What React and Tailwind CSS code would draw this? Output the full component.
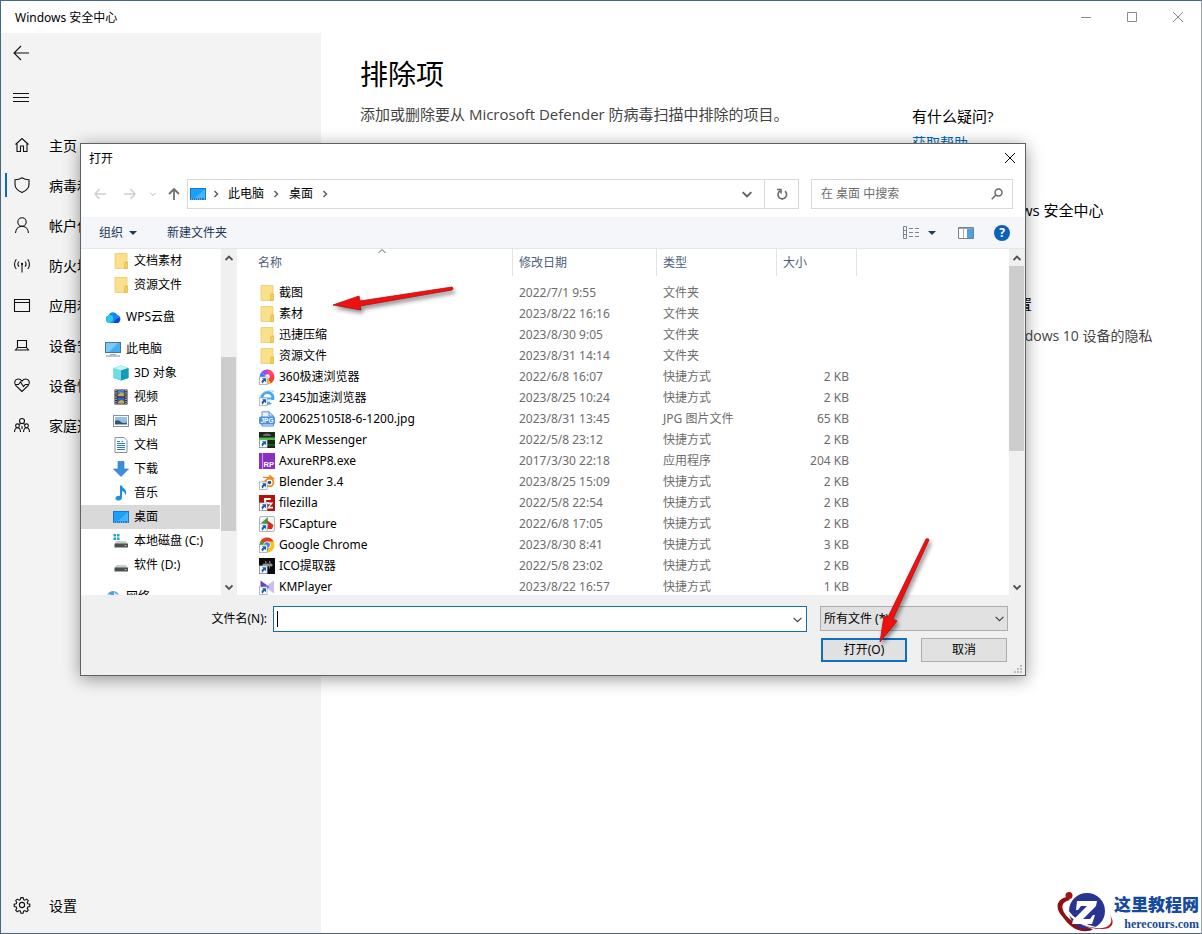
import React from 'react';

const SIDE_ITEMS = [
  { icon: 'home',    label: '主页' },
  { icon: 'shield',  label: '病毒和威胁', active: true },
  { icon: 'user',    label: '帐户保护' },
  { icon: 'antenna', label: '防火墙' },
  { icon: 'app',     label: '应用和' },
  { icon: 'laptop',  label: '设备安全' },
  { icon: 'heart',   label: '设备性能' },
  { icon: 'family',  label: '家庭选项' },
];

const TREE = [
  { icon: 'folder',   label: '文档素材', sub: true },
  { icon: 'folder',   label: '资源文件', sub: true },
  { icon: 'cloud',    label: 'WPS云盘', gap: true },
  { icon: 'pc',       label: '此电脑', gap: true },
  { icon: 'cube',     label: '3D 对象', sub: true },
  { icon: 'video',    label: '视频', sub: true },
  { icon: 'picture',  label: '图片', sub: true },
  { icon: 'document', label: '文档', sub: true },
  { icon: 'download', label: '下载', sub: true },
  { icon: 'music',    label: '音乐', sub: true },
  { icon: 'desktop',  label: '桌面', sub: true, active: true },
  { icon: 'diskC',    label: '本地磁盘 (C:)', sub: true },
  { icon: 'disk',     label: '软件 (D:)', sub: true },
  { icon: 'network',  label: '网络', gap: true },
];

const FILES = [
  ['folder',   '截图',                  '2022/7/1 9:55',    '文件夹',       ''],
  ['folder',   '素材',                  '2023/8/22 16:16',  '文件夹',       ''],
  ['folder',   '迅捷压缩',              '2023/8/30 9:05',   '文件夹',       ''],
  ['folder',   '资源文件',              '2023/8/31 14:14',  '文件夹',       ''],
  ['b360',     '360极速浏览器',         '2022/6/8 16:07',   '快捷方式',     '2 KB'],
  ['b2345',    '2345加速浏览器',        '2023/8/25 10:24',  '快捷方式',     '2 KB'],
  ['jpg',      '200625105I8-6-1200.jpg', '2023/8/31 13:45', 'JPG 图片文件', '65 KB'],
  ['apk',      'APK Messenger',         '2022/5/8 23:12',   '快捷方式',     '2 KB'],
  ['axure',    'AxureRP8.exe',          '2017/3/30 22:18',  '应用程序',     '204 KB'],
  ['blender',  'Blender 3.4',           '2023/8/25 15:09',  '快捷方式',     '2 KB'],
  ['filezilla', 'filezilla',            '2022/5/8 22:54',   '快捷方式',     '2 KB'],
  ['fsc',      'FSCapture',             '2022/6/8 17:05',   '快捷方式',     '2 KB'],
  ['chrome',   'Google Chrome',         '2023/8/30 8:41',   '快捷方式',     '3 KB'],
  ['ico',      'ICO提取器',             '2022/5/8 23:02',   '快捷方式',     '2 KB'],
  ['km',       'KMPlayer',              '2023/8/22 16:57',  '快捷方式',     '1 KB'],
];

// thin outline glyphs of the left navigation
const LINE = {
  home: <path d="M1.5 7.5 8 1.5l6.5 6M3 6.5v8h3.5V9h3v5.500H13v-8" />,
  shield: <path d="M8 .8c2 1.4 4.300 2 7 2v4.600c0 3.600-2.700 6.100-7 8.100-4.300-2-7-4.500-7-8.100V2.800c2.700 0 5-.6 7-2z" />,
  user: <><circle cx="8" cy="5" r="4.200" /><path d="M1.500 16c.3-4 3-6.800 6.500-6.800s6.200 2.800 6.500 6.800" /></>,
  antenna: <><circle cx="8" cy="7" r=".6" /><path d="M8 7.500v8M5 4.500a4 4 0 0 0 0 5.200M11 4.500a4 4 0 0 1 0 5.200M2.300 2.300a7.500 7.500 0 0 0 0 9.700M13.700 2.300a7.500 7.500 0 0 1 0 9.700" /></>,
  app: <path d="M.5 2.500h15v12H.5zM.5 5.500h15" />,
  laptop: <path d="M3.500 3.500h9v7h-9zM3.500 10.500 1.500 13h13l-2-2.500" />,
  heart: <><path d="M8 14.500 1.700 8.300C-.3 6 .7 2 4.200 2 6 2 7.200 3 8 4.200 8.800 3 10 2 11.800 2c3.500 0 4.500 4 2.500 6.300z" /><path d="M1 7.500h3.500l2-2.500 3 4.500 1.800-2H15" /></>,
  family: <><circle cx="8" cy="4" r="2.500" /><circle cx="3.500" cy="8.800" r="1.900" /><circle cx="12.500" cy="8.800" r="1.900" /><path d="M.5 15c.2-2.600 1.300-4.200 3-4.200s2.900 1.600 3 4.200M9.500 15c.2-2.600 1.300-4.200 3-4.200s2.900 1.600 3 4.200M5 7.500c.6-.7 1.600-1 3-1s2.400.3 3 1M8 9v3" /></>,
  gear: <><circle cx="8" cy="8" r="2.600" /><path d="M6.900.6h2.200l.5 2 1.300.6 1.800-1.100 1.600 1.600-1.100 1.800.6 1.300 2 .5v2.200l-2 .5-.6 1.300 1.100 1.800-1.600 1.600-1.800-1.100-1.300.6-.5 2H6.900l-.5-2-1.300-.6-1.800 1.100-1.600-1.600 1.100-1.800-.6-1.300-2-.5V7.300l2-.5.6-1.300-1.100-1.800 1.600-1.600 1.800 1.100 1.300-.6z" /></>,
  back: <path d="M8 1 1 8l7 7M1 8h15" />,
  menu: <path d="M0 4.500h16M0 8.500h16M0 12.500h16" />,
};

function LineIcon({ name }) {
  return (
    <svg viewBox="0 0 16 16" className="w-4 h-4 shrink-0 overflow-visible" fill="none" stroke="#111" strokeWidth="1.1">
      {LINE[name]}
    </svg>
  );
}

const Shortcut = () => (
  <g>
    <rect x=".4" y="7.900" width="7.700" height="7.700" fill="#fff" stroke="#8fa0b4" strokeWidth=".7" />
    <path d="M3 9.300h4v4L5.700 12c-1.200.8-1.700 1.500-1.800 2.700C1.800 13.200 2.500 11.500 4.300 10.600z" fill="#1d5ca8" />
  </g>
);

const Disk = () => (
  <g>
    <path d="M3.500 8h9.500l2 3H1.500z" fill="#c9cbcd" />
    <rect x="1.500" y="10.500" width="13.500" height="4" rx=".6" fill="#4b4f52" />
    <rect x="11.800" y="12" width="1.500" height="1.200" fill="#7be08a" />
  </g>
);

const COLOR = {
  folder: <><path d="M2 .5h12v15H2z" fill="#fbe08c" /><path d="M2 .5h12v15H2z" fill="none" stroke="#ecca68" strokeWidth=".8" /><path d="M12 9h2.500v6.500h-3z" fill="#f5cf62" stroke="#d9ac3b" strokeWidth=".6" /></>,
  cloud: <><path d="M4.500 14a4 4 0 0 1-.8-7.800 4.700 4.700 0 0 1 8.700-.2A4.100 4.100 0 0 1 12 14z" fill="#1687ee" /><path d="M4.500 14a4 4 0 0 1-.5-7.800c1.800-.6 3.400.2 4 1.800 1 2.800-.5 5-3.500 6z" fill="#27cbe8" /><path d="M9 14c.2-3 2.300-5 6-5.500.5 3.500-1 5.500-3 5.500z" fill="#1547d4" /></>,
  pc: <><rect x=".5" y="1.500" width="15" height="10" fill="#45aef2" stroke="#47759b" /><path d="M1 2h12L4 11H1z" fill="#7cc9f7" /><path d="M5 13h6v1H5z" fill="#9fb3c2" /><path d="M1 14.500h14v1H1z" fill="#6d8ba3" /></>,
  cube: <><path d="m8 .5 7.500 2.500v10L8 15.500.5 13V3z" fill="#35bfd6" /><path d="M.5 3 8 5.500v10L.5 13z" fill="#73dbe6" /><path d="m.5 3 7.500-2.500L15.500 3 8 5.500z" fill="#c4f2f5" /><path d="M8 5.500 15.500 3v10L8 15.500z" fill="#159db8" /></>,
  video: <><rect x="1.500" y=".5" width="13" height="15" fill="#2c2c2c" /><path d="M4.500 1h7v6.500h-7z" fill="#4c76d0" /><path d="M4.500 8.500h7V15h-7z" fill="#3b62bd" /><path d="m5 6 3-3 3 2v2H5zM5 13l3-2 3 1v2.500H5z" fill="#d1a83d" /><path d="M3 1v14M13 1v14" stroke="#ddd" strokeWidth="1.200" strokeDasharray="1.200 1" /></>,
  picture: <><rect x=".5" y="2.500" width="15" height="11" fill="#fff" stroke="#8a9298" /><path d="M2 4h12v8H2z" fill="#8fc3ea" /><path d="M2 8c3-1.500 4-.5 6 1s4 1 6 .5V12H2z" fill="#33566b" /><path d="M2 11h12v1H2z" fill="#9db4c0" /></>,
  document: <><path d="M2 .5h9l3 3v12H2z" fill="#fff" stroke="#8492a1" /><path d="M4 4.500h3M4 6.500h8M4 8.500h8M4 10.500h8M4 12.500h8M8.500 4.500h1.500" stroke="#2c7cc4" strokeWidth="1" /></>,
  download: <path d="M5 .5h6V8h4.500L8 15.500.5 8H5z" fill="#3b8fdf" stroke="#276fb8" strokeWidth=".6" />,
  music: <path d="M7 .5h2c.3 2.600 4 3.500 4.200 6.500.1 1.400-.4 2.400-1.200 3.300.4-2.500-.9-3.700-3-4.300v6.500c0 1.900-1.600 3-3.400 3S2.500 14.700 2.500 13.200 4 10.500 7 10.800z" fill="#1b8fe8" />,
  desktop: <><path d="M0 2h16v12H0z" fill="#1779c8" /><path d="M1 3h14v9H1z" fill="#18a0fb" /><path d="M15 3v9H5z" fill="#43b5ff" /><path d="M1 13h1M3 13h10M14 13h1" stroke="#e6f4ff" strokeWidth=".8" strokeDasharray="1 1" /></>,
  diskC: <><Disk /><path d="M.5 1h2.500v2.500H.5zM4 1h2.500v2.500H4zM.5 4.500h2.500V7H.5zM4 4.500h2.500V7H4z" fill="#1aa3dd" /></>,
  disk: <Disk />,
  network: <><circle cx="8" cy="8" r="6" fill="#4fa3d8" /><path d="M3 5c2 1 3 0 4 2s-1 4-1 6C3 12 1 9 3 5zM9 2.500c1 2 2 2 4 3l-1 4-3-2z" fill="#cfe9f7" /></>,
  b360: <><path d="M8 8 2 3.500A7.500 7.500 0 0 1 8.500.5L12 2z" fill="#9a4ee8" /><path d="M8 8 8.500.5A7.500 7.500 0 0 1 15 5.500l-2 2z" fill="#ff3d8b" /><path d="m8 8 7-2.500a7.500 7.500 0 0 1-3.500 9z" fill="#f8442e" /><path d="m8 8 3.500 6.500a7.500 7.500 0 0 1-6 .5z" fill="#fbb62a" /><path d="M8 8 .7 9.500A7.500 7.500 0 0 1 2 3.500z" fill="#2d7ff5" /><circle cx="8.500" cy="7.500" r="2.300" fill="#fff" /><Shortcut /></>,
  b2345: <><circle cx="8.500" cy="8" r="5.500" fill="none" stroke="#46a7ee" strokeWidth="3" /><path d="M4 7.500h10v2H4z" fill="#46a7ee" /><path d="M11 10h5v3h-5z" fill="#fff" /><path d="M1 8C1 3 9-1 15 1.500" fill="none" stroke="#8bcbf7" /><Shortcut /></>,
  jpg: <><path d="M3 .8h7L14.500 5v10H3z" fill="#eaf3fd" stroke="#4a90dc" /><path d="M10 .8V5h4.500" fill="none" stroke="#4a90dc" /><rect x="0" y="5.500" width="16" height="8" rx="2" fill="#4a90dc" /><text x="8" y="12" fontSize="6.500" fontWeight="700" textAnchor="middle" fill="#fff" fontFamily="Liberation Sans, sans-serif">JPG</text></>,
  apk: <><rect width="16" height="16" fill="#20241f" /><path d="M0 5.500h16v2.500H0z" fill="#38c433" /><path d="M4 4a4 2.500 0 0 1 8 0z" fill="#686d66" /><path d="M6 12h10v2H6z" fill="#165b1a" /><Shortcut /></>,
  axure: <><rect width="16" height="16" fill="#8d2fc0" /><path d="M3.500 0v16" stroke="#dcbaf0" strokeWidth=".8" /><text x="9.800" y="13.800" fontSize="7.500" fontWeight="700" textAnchor="middle" fill="#fff" fontFamily="Liberation Sans, sans-serif">RP</text></>,
  blender: <><path d="M1.500 9.500 9 4H4V2.800h7L9.500 1.500l1.200-.8L16 5z" fill="#e98a22" /><circle cx="10.500" cy="8.500" r="4.800" fill="#ee8c1f" /><circle cx="10.500" cy="8.500" r="3" fill="#fff" /><circle cx="10.500" cy="8.500" r="1.800" fill="#27568f" /><Shortcut /></>,
  filezilla: <><rect width="16" height="16" fill="#b3130c" /><path d="M5 13V3h7l-.4 2H7.200v2H10l-.4 2H7.200v4z" fill="#fff" /><path d="M8.500 7.500h5.800l-3.600 4.300h3.300V13.500H8l3.300-4.300H8.500z" fill="#fff" /><Shortcut /></>,
  fsc: <><rect x=".5" y=".5" width="15" height="15" rx="1.500" fill="#f4f4f4" stroke="#b5b9bb" /><path d="M2 7 9 1l-.5 5 3 2H4z" fill="#35a53d" /><path d="M7 3.500 14.500 9 13 13H8l1-5z" fill="#d62a22" /><Shortcut /></>,
  chrome: <><circle cx="8" cy="8" r="7.500" fill="#fbc116" /><path d="M8 8 1.500 4.200A7.500 7.500 0 0 1 14.600 4.500H8z" fill="#e33b2e" /><path d="M1.500 4.200A7.500 7.500 0 0 0 7.400 15.500L10.500 10 8 8z" fill="#2ba24c" /><circle cx="8" cy="8" r="3.600" fill="#fff" /><circle cx="8" cy="8" r="2.800" fill="#3b7ded" /><Shortcut /></>,
  ico: <><rect width="16" height="16" fill="#0c0c0c" /><path d="M4 6h9v2H4zM6 3.500h1v2M10 3.500h1v2M6.500 8v2.500M10.500 8v2.500" fill="#8d9496" stroke="#8d9496" strokeWidth=".8" /><Shortcut /></>,
  km: <><path d="m1.500 1.500 9 6.500-9 6.500z" fill="#6243c4" /><path d="M15 1.500v13L6 8z" fill="#c9bdf1" /><path d="m6.500 5.200 4 2.800-4 3z" fill="#7c5edb" /><Shortcut /></>,
};

function ColorIcon({ name }) {
  return <svg viewBox="0 0 16 16" className="w-4 h-4 shrink-0">{COLOR[name]}</svg>;
}

function Chevron({ dir = 'down', className = 'w-2 h-2', color = '#606060', width = 1.5 }) {
  const d = { down: 'M.5 2.500 4 6l3.500-3.500', up: 'M.5 6 4 2.500 7.500 6', right: 'M2.500 1 5.500 4l-3 3' }[dir];
  return (
    <svg viewBox="0 0 8 8" className={`shrink-0 ${className}`} fill="none" stroke={color} strokeWidth={width}>
      <path d={d} />
    </svg>
  );
}

const Triangle = () => (
  <svg viewBox="0 0 8 4" className="w-2 h-1 shrink-0"><path d="M0 0h8L4 4z" fill="#1e395b" /></svg>
);

function ScrollBar({ spacer, thumb }) {
  return (
    <div className="w-4 shrink-0 flex flex-col items-stretch bg-[#f0f0f0] pr-px">
      <div className="h-[17px] flex items-center justify-center"><Chevron dir="up" width={1.8} color="#505050" /></div>
      <div className={spacer} />
      <div className={`bg-[#cdcdcd] ${thumb}`} />
      <div className="flex-1" />
      <div className="h-[17px] flex items-center justify-center"><Chevron width={1.8} color="#505050" /></div>
    </div>
  );
}

function TitleBar() {
  return (
    <header className="h-8 shrink-0 flex items-center justify-between pl-[14px] text-[12px]">
      <span className="leading-5 pt-[2px]">Windows 安全中心</span>
      <div className="flex">
        <button aria-label="最小化" className="w-[46px] h-8 flex items-center justify-center">
          <svg viewBox="0 0 10 10" className="w-[10px] h-[10px]" stroke="#8a8a8a"><path d="M0 5.500h10" /></svg>
        </button>
        <button aria-label="最大化" className="w-[46px] h-8 flex items-center justify-center">
          <svg viewBox="0 0 10 10" className="w-[10px] h-[10px]" fill="none" stroke="#8a8a8a"><path d="M.5.5h9v9h-9z" /></svg>
        </button>
        <button aria-label="关闭" className="w-[46px] h-8 flex items-center justify-center">
          <svg viewBox="0 0 10 10" className="w-[10px] h-[10px]" stroke="#8a8a8a"><path d="m0 0 10 10M10 0 0 10" /></svg>
        </button>
      </div>
    </header>
  );
}

function Sidebar() {
  return (
    <aside className="w-80 shrink-0 bg-[#f3f3f3] flex flex-col text-[14px]">
      <button aria-label="返回" className="h-10 w-12 pl-3 flex items-center"><LineIcon name="back" /></button>
      <button aria-label="菜单" className="h-12 w-12 pl-3 flex items-center"><LineIcon name="menu" /></button>
      <nav className="mt-1">
        {SIDE_ITEMS.map(it => (
          <a key={it.label} href="#" className="h-10 flex items-center gap-[19px] pl-1">
            <span className={`w-[2px] h-6 mr-[-12px] ${it.active ? 'bg-[#0f6cb0]' : ''}`} />
            <LineIcon name={it.icon} />
            <span>{it.label}</span>
          </a>
        ))}
      </nav>
      <a href="#" className="h-10 mt-auto mb-2 flex items-center gap-[19px] pl-[13px]">
        <LineIcon name="gear" />
        <span>设置</span>
      </a>
    </aside>
  );
}

function Main() {
  return (
    <main className="flex-1 flex pl-[39px] pt-5 font-['Open_Sans','Noto_Sans_CJK_SC',sans-serif]">
      <section className="w-[552px] shrink-0">
        <h1 className="text-[28px] leading-[42px]">排除项</h1>
        <p className="mt-[7px] text-[15px] leading-6 text-[#444]">添加或删除要从 Microsoft Defender 防病毒扫描中排除的项目。</p>
      </section>
      <section className="flex-1 pt-[51px] text-[15px] leading-6 whitespace-nowrap">
        <h2>有什么疑问?</h2>
        <a href="#" className="block mt-[3px] text-[14px] text-[#0067b8]">获取帮助</a>
        <h2 className="mt-[43px]">帮助改进 Windows 安全中心</h2>
        <a href="#" className="block mt-[2px] text-[14px] text-[#0067b8]">提供反馈</a>
        <h2 className="mt-11">更改你的隐私设置</h2>
        <p className="mt-2 text-[14px] text-[#444]">查看和更改您 Windows 10 设备的隐私</p>
      </section>
    </main>
  );
}

function AddressRow() {
  const navBtn = 'h-[30px] flex items-center justify-center';
  return (
    <div className="flex h-[30px] pl-1 pr-3">
      <button aria-label="后退" className={`w-[30px] ${navBtn}`}>
        <svg viewBox="0 0 12 12" className="w-3 h-3" fill="none" stroke="#cfcfcf" strokeWidth="1.500"><path d="M5.500 1 1 6l4.500 5M1 6h11" /></svg>
      </button>
      <button aria-label="前进" className={`w-[30px] ${navBtn}`}>
        <svg viewBox="0 0 12 12" className="w-3 h-3" fill="none" stroke="#cfcfcf" strokeWidth="1.500"><path d="M6.500 1 11 6l-4.500 5M11 6H0" /></svg>
      </button>
      <button aria-label="最近的位置" className={`w-4 ${navBtn}`}><Chevron className="w-[6px] h-[6px]" color="#cfcfcf" /></button>
      <button aria-label="上移" className={`w-[26px] ${navBtn}`}>
        <svg viewBox="0 0 12 12" className="w-3 h-3" fill="none" stroke="#6f6f6f" strokeWidth="1.800"><path d="M1 6 6 1l5 5M6 1v11" /></svg>
      </button>
      <div className="flex-1 flex border border-[#d9d9d9]">
        <div className="flex-1 flex items-center pl-[2px] pr-3">
          <ColorIcon name="desktop" />
          <Chevron dir="right" className="w-2 h-2 ml-[6px]" />
          <button className="ml-2">此电脑</button>
          <Chevron dir="right" className="w-2 h-2 ml-2" />
          <button className="ml-[9px]">桌面</button>
          <Chevron dir="right" className="w-2 h-2 ml-2" />
          <button aria-label="上一个位置" className="ml-auto"><Chevron className="w-[10px] h-[10px]" /></button>
        </div>
        <button aria-label="刷新" className="w-[34px] border-l border-[#d9d9d9] flex items-center justify-center">
          <svg viewBox="0 0 12 12" className="w-3 h-3" fill="none" stroke="#6a6a6a" strokeWidth="1.600"><path d="M9 3.200A4.300 4.300 0 1 1 4 2.900M1 1.500h4v4" /></svg>
        </button>
      </div>
      <label className="w-[202px] ml-3 px-[9px] flex items-center border border-[#d9d9d9]">
        <input type="text" aria-label="搜索" placeholder="在 桌面 中搜索" className="flex-1 min-w-0 outline-none placeholder-[#6d6d6d]" />
        <svg viewBox="0 0 12 12" className="w-3 h-3" fill="none" stroke="#6a6a6a" strokeWidth="1.500"><circle cx="7.500" cy="4.500" r="3.500" /><path d="M5 7 .7 11.300" /></svg>
      </label>
    </div>
  );
}

function Toolbar() {
  return (
    <div className="h-8 mt-2 flex items-center pl-[18px] pr-[15px] bg-[#f4f6f9] border-b border-[#e3e7ec] text-[#1e395b]">
      <button className="flex items-center gap-[6px]">组织 <Triangle /></button>
      <button className="ml-[30px]">新建文件夹</button>
      <button aria-label="更改视图" className="ml-auto flex items-center gap-[9px]">
        <svg viewBox="0 0 16 14" className="w-4 h-[14px]" fill="none" stroke="#7b858f">
          <path d="M.5.500h3v12h-3zM.5 4.500h3M.5 8.500h3M6 2.500h4M12 2.500h4M6 6.500h4M12 6.500h4M6 10.500h4M12 10.500h4" />
        </svg>
        <Triangle />
      </button>
      <button aria-label="预览窗格" className="ml-[22px]">
        <svg viewBox="0 0 16 12" className="w-4 h-3"><path d="M.5.500h15v11H.5z" fill="#fff" stroke="#77808a" /><path d="M5.500 1v10" stroke="#a5adb5" /><path d="M9 2h6v9H9z" fill="#4aa3e6" /><path d="M1 1.500h14" stroke="#9aa4ae" /></svg>
      </button>
      <button aria-label="帮助" className="ml-5 w-4 h-4 rounded-full bg-[#0a62bd] text-white font-bold leading-4">?</button>
    </div>
  );
}

function TreePane() {
  return (
    <div className="w-[140px] shrink-0 overflow-hidden">
      <ul>
        {TREE.map((n, i) => (
          <li key={i} className={n.gap ? 'mt-2' : ''}>
            <a href="#" className={`h-6 flex items-center whitespace-nowrap gap-[5px] ${n.sub ? 'pl-8' : 'pl-6'} ${n.active ? 'bg-[#d9d9d9] mr-px' : ''}`}>
              <ColorIcon name={n.icon} />
              {n.label}
            </a>
          </li>
        ))}
      </ul>
    </div>
  );
}

function FileTable() {
  const head = 'h-[27px] flex items-center border-r border-[#e0e3e8]';
  return (
    <div className="flex-1 ml-[2px] overflow-hidden">
      <table className="w-full table-fixed border-collapse text-left">
        <colgroup>
          <col className="w-[274px]" />
          <col className="w-36" />
          <col className="w-[120px]" />
          <col className="w-20" />
          <col />
        </colgroup>
        <thead>
          <tr className="h-[33px] align-top text-[#4c607a]">
            <th className="p-0 font-normal relative">
              <div className={`${head} pl-[19px]`}>名称</div>
              <Chevron dir="up" className="w-2 h-2 absolute top-[-2px] left-[139px]" width={1} />
            </th>
            <th className="p-0 font-normal"><div className={`${head} pl-[6px]`}>修改日期</div></th>
            <th className="p-0 font-normal"><div className={`${head} pl-[6px]`}>类型</div></th>
            <th className="p-0 font-normal"><div className={`${head} pl-[6px]`}>大小</div></th>
            <th className="p-0" />
          </tr>
        </thead>
        <tbody className="text-[#6d6d6d]">
          {FILES.map(([icon, name, date, type, size]) => (
            <tr key={name} className="h-[21px]">
              <td className="p-0">
                <div className="flex items-center gap-1 pl-5 text-black"><ColorIcon name={icon} />{name}</div>
              </td>
              <td className="p-0 pl-[6px]">{date}</td>
              <td className="p-0 pl-[6px]">{type}</td>
              <td className="p-0 pr-2 text-right">{size}</td>
              <td className="p-0" />
            </tr>
          ))}
        </tbody>
      </table>
    </div>
  );
}

function DialogFooter() {
  return (
    <div className="flex-1 bg-[#f0f0f0] pt-[11px] pr-[17px]">
      <div className="flex items-start">
        <label htmlFor="fname" className="w-[187px] pr-px text-right leading-[26px]">文件名(N):</label>
        <div className="flex-1 h-[26px] ml-[5px] mr-[13px] pl-[3px] pr-1 flex items-center bg-white border border-[#1a6dab]">
          <span className="w-px h-4 bg-black" />
          <input id="fname" type="text" className="flex-1 min-w-0 h-full px-1 outline-none" />
          <Chevron className="w-[9px] h-[9px]" width={1} color="#404040" />
        </div>
        <div className="w-[188px] relative">
          <select aria-label="文件类型" className="w-full h-[25px] pl-[3px] appearance-none bg-[#e1e1e1] border border-[#adadad] outline-none">
            <option>所有文件 (*)</option>
          </select>
          <Chevron className="w-[9px] h-[9px] absolute right-1 top-2" width={1} color="#404040" />
        </div>
      </div>
      <div className="flex justify-end gap-[14px] mt-[6px] pr-px">
        <button className="w-[86px] h-6 bg-[#e1e1e1] border-2 border-[#0f6fc0]">打开(O)</button>
        <button className="w-[86px] h-6 bg-[#e1e1e1] border border-[#adadad]">取消</button>
      </div>
      <svg viewBox="0 0 9 9" className="w-[9px] h-[9px] ml-auto mr-[-15px] mt-[3px]" fill="#bdbdbd">
        <path d="M6 0h2v2H6zM3 3h2v2H3zM6 3h2v2H6zM0 6h2v2H0zM3 6h2v2H3zM6 6h2v2H6z" />
      </svg>
    </div>
  );
}

function OpenDialog() {
  return (
    <div role="dialog" aria-label="打开"
      className="absolute left-[79px] top-[142px] w-[946px] h-[533px] flex flex-col bg-white border border-[#5f6265] shadow-[0_3px_16px_rgba(0,0,0,0.4)] text-[12px] leading-4">
      <div className="h-[35px] shrink-0 flex items-start justify-between pl-2 pr-[10px]">
        <span className="leading-[30px]">打开</span>
        <button aria-label="关闭对话框" className="h-7 flex items-center">
          <svg viewBox="0 0 10 10" className="w-[10px] h-[10px]" stroke="#000"><path d="m0 0 10 10M10 0 0 10" /></svg>
        </button>
      </div>
      <AddressRow />
      <Toolbar />
      <div className="h-[346px] shrink-0 flex overflow-hidden">
        <TreePane />
        <ScrollBar spacer="h-[91px]" thumb="h-[174px]" />
        <FileTable />
        <ScrollBar spacer="h-0" thumb="h-[185px]" />
      </div>
      <DialogFooter />
    </div>
  );
}

// red pointer arrows drawn above everything
function Arrows() {
  return (
    <svg viewBox="1 1 1202 934" className="absolute left-0 top-0 w-[1202px] h-[934px] pointer-events-none drop-shadow-[2px_3px_2px_rgba(0,0,0,0.45)]">
      <g fill="#ee1111" stroke="#b80d0d" strokeWidth=".8" strokeLinejoin="round">
        <path d="m333 305 26-9 1 5 92-14q2 1 0 3l-92 16 1 4z" />
        <path d="m880 642 4-26 4 1 38-78q3-1 3 1l-36 79 4 2z" />
      </g>
    </svg>
  );
}

function Watermark() {
  return (
    <div className="absolute -right-px -bottom-px w-[147px] h-[82px] pl-[1px] pr-[5px] pb-px flex items-end justify-between bg-white">
      <svg viewBox="0 0 58 42" className="w-[58px] h-[42px] shrink-0">
        <path d="M11 6C0 8-1 18 6 25c4 5 6 8 9 10 8 7 19 6 22 3C24 36 10 28 7 19 5 14 8 10 14 9z" fill="#8f1013" />
        <circle cx="13" cy="4.500" r="3.500" fill="#a11417" />
        <circle cx="31" cy="20" r="18" fill="#28348f" />
        <path d="M9 12C10 25 26 36 49 39" fill="none" stroke="#fff" strokeWidth="2.500" />
        <path d="M54 24c6 9 1 15-9 14-7 0-15-2-22-6 10 5 24 7 29 3 4-3 4-7 2-11z" fill="#b3191b" />
        <path d="M21 10h20l-1 5-13 13h7l3-4h2l-3 9H16l1-4 14-14h-6l-3 4h-2z" fill="#fff" />
      </svg>
      <div className="text-[#174a9c] font-bold whitespace-nowrap text-right">
        <div className="text-[17px] leading-5 font-black">这里教程网</div>
        <div className="text-[12px] leading-[18px] font-['Liberation_Serif',serif]">herecours.com</div>
      </div>
    </div>
  );
}

export default function App() {
  return (
    <div className="relative min-h-screen flex flex-col overflow-hidden bg-white border border-[#44697f] border-r-[#9aa0a5] text-black font-['Noto_Sans','Noto_Sans_CJK_SC',sans-serif]">
      <TitleBar />
      <div className="flex-1 flex">
        <Sidebar />
        <Main />
      </div>
      <OpenDialog />
      <Arrows />
      <Watermark />
    </div>
  );
}
